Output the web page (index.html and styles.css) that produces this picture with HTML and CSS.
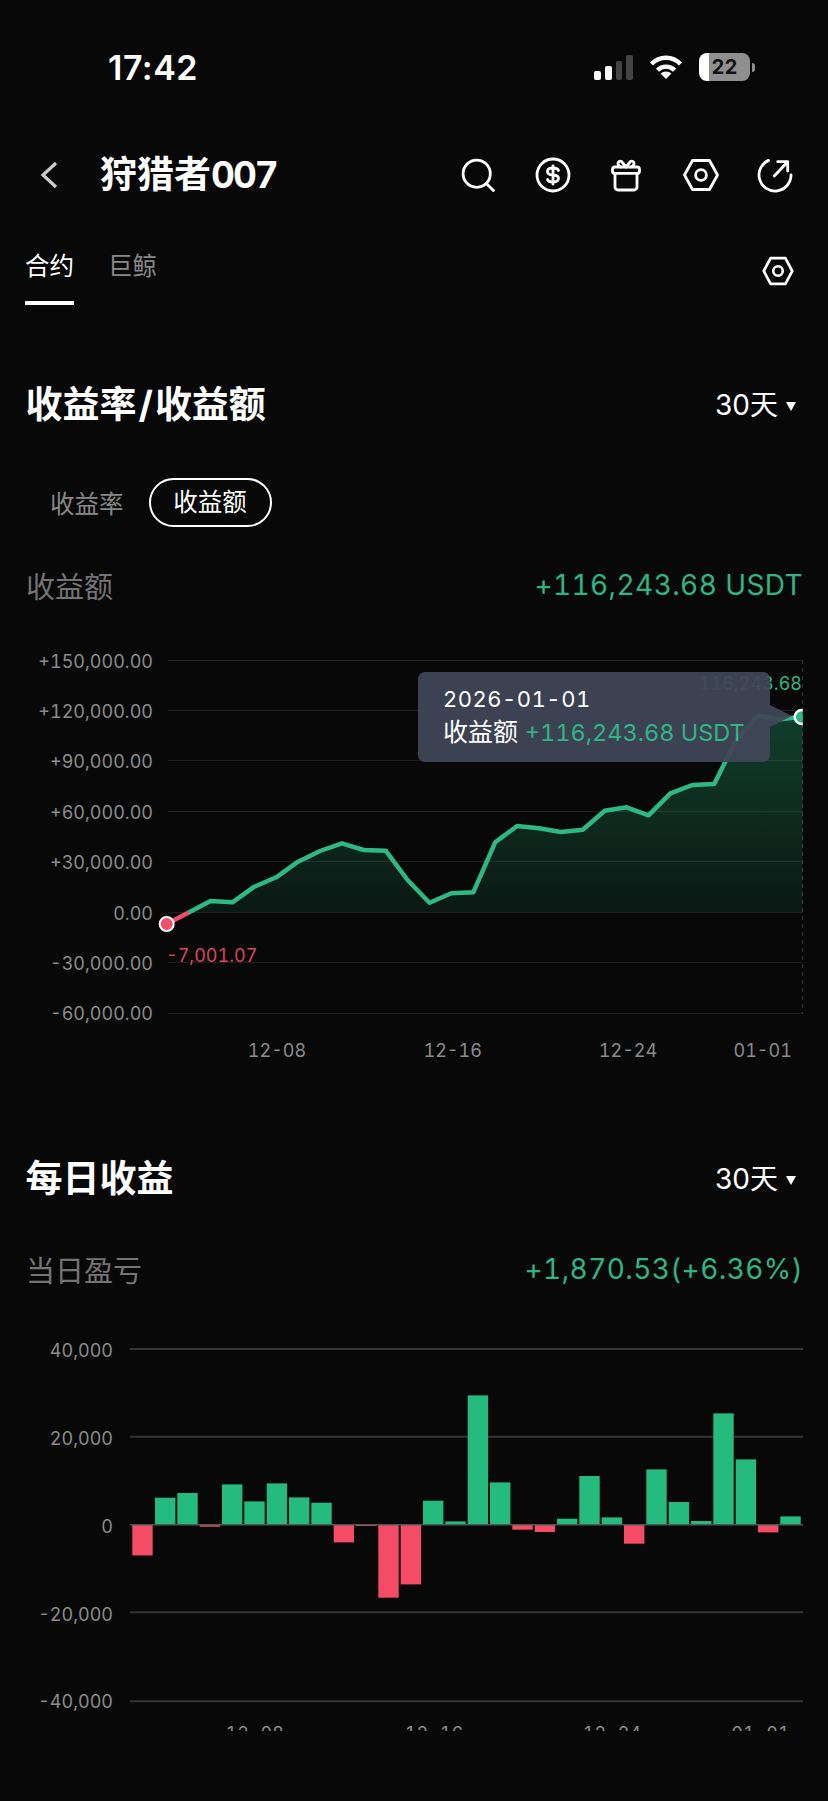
FILE: index.html
```html
<!DOCTYPE html>
<html lang="zh-CN">
<head>
    <meta charset="UTF-8">
    <meta name="viewport" content="width=device-width, initial-scale=1.0">
    <title>狩猎者007</title>
    <link rel="stylesheet" href="styles.css">
</head>
<body>
    <div class="page">
        <!-- Статус-бар -->
        <div class="status-bar">
            <div class="time">17:42</div>
            <div class="status-icons">
                <div class="signal">
                    <span class="bar b1 on"></span>
                    <span class="bar b2 on"></span>
                    <span class="bar b3"></span>
                    <span class="bar b4"></span>
                </div>
                <svg class="wifi" viewBox="0 0 34 24" width="34" height="24">
                    <path d="M2.5 9A20 20 0 0 1 31.5 9" fill="none" stroke="#fff" stroke-width="4.4"/>
                    <path d="M8.5 15.2A12 12 0 0 1 25.5 15.2" fill="none" stroke="#fff" stroke-width="4.4"/>
                    <path d="M17 24L11.6 18.6A8 8 0 0 1 22.4 18.6Z" fill="#fff"/>
                </svg>
                <div class="battery"><span>22</span></div>
                <div class="battery-tip"></div>
            </div>
        </div>

        <!-- Шапка -->
        <div class="nav">
            <svg class="back" viewBox="0 0 18 28" width="18" height="28">
                <path d="M16 2L3 14L16 26" fill="none" stroke="#ccc" stroke-width="3.2"/>
            </svg>
            <h1 class="nav-title">狩猎者<span class="nav-num">007</span></h1>
            <div class="nav-icons">
                <svg class="icon" viewBox="0 0 40 40">
                    <circle cx="19.7" cy="18.7" r="13.6"/>
                    <path d="M29.4 28.4L36.4 35.6"/>
                </svg>
                <svg class="icon icon-coin" viewBox="0 0 40 40">
                    <circle cx="20" cy="20" r="16"/>
                    <path d="M25.5 15.5C25 13.8 23 13 20 13C16.5 13 14.5 14.6 14.5 16.7C14.5 19 17 19.7 20 20C23 20.3 25.5 21 25.5 23.3C25.5 25.4 23.5 27 20 27C17 27 15 26.2 14.5 24.5M20 10.8V29.2"/>
                </svg>
                <svg class="icon" viewBox="0 0 40 40">
                    <rect x="6.5" y="12" width="27" height="6.4" rx="2.5"/>
                    <path d="M9 18.4V32A3 3 0 0 0 12 35H28A3 3 0 0 0 31 32V18.4"/>
                    <path d="M20 12L15.5 6.5C14 5.5 12 6.5 12 8.5C12 10.5 13 11.5 15 12M20 12L24.5 6.5C26 5.5 28 6.5 28 8.5C28 10.5 27 11.5 25 12"/>
                </svg>
                <svg class="icon" viewBox="0 0 40 40">
                    <path d="M3.5 20L11.5 5.5H28.5L36.5 20L28.5 34.5H11.5Z"/>
                    <circle cx="20" cy="20" r="5.4"/>
                </svg>
                <svg class="icon" viewBox="0 0 40 40">
                    <path d="M13.5 5.4A16 16 0 1 0 36 20"/>
                    <path d="M19.3 21L32.7 6.7M22.7 6.7H32.7V16"/>
                </svg>
            </div>
        </div>

        <!-- Вкладки -->
        <div class="tabs">
            <div class="tab active">合约</div>
            <div class="tab">巨鲸</div>
            <svg class="icon tab-icon" viewBox="0 0 40 40">
                <path d="M5 20L12.2 6.5H27.8L35 20L27.8 33.5H12.2Z"/>
                <circle cx="20" cy="20" r="5"/>
            </svg>
        </div>

        <!-- Доходность -->
        <div class="section-head first">
            <h2>收益率<span class="slash">/</span>收益额</h2>
            <div class="range">30天<i class="caret"></i></div>
        </div>

        <div class="switch">
            <div class="switch-item">收益率</div>
            <div class="switch-item selected">收益额</div>
        </div>

        <div class="value-row">
            <span class="value-label">收益额</span>
            <span class="value-num">+116,243.68 USDT</span>
        </div>

        <div class="chart line-chart">
            <svg viewBox="0 640 828 430" width="828" height="430">
                <defs>
                    <linearGradient id="areaFill" x1="0" y1="0" x2="0" y2="1">
                        <stop offset="0" stop-color="#26bb7e" stop-opacity="0.3"/>
                        <stop offset="1" stop-color="#26bb7e" stop-opacity="0.09"/>
                    </linearGradient>
                    <clipPath id="plotClip"><rect x="130" y="640" width="672.7" height="400"/></clipPath>
                </defs>

                <g class="grid-thin">
                    <line x1="168" x2="803" y1="660.5" y2="660.5"/>
                    <line x1="168" x2="803" y1="710.5" y2="710.5"/>
                    <line x1="168" x2="803" y1="760.5" y2="760.5"/>
                    <line x1="168" x2="803" y1="811.5" y2="811.5"/>
                    <line x1="168" x2="803" y1="861.5" y2="861.5"/>
                    <line x1="168" x2="803" y1="912.5" y2="912.5"/>
                    <line x1="168" x2="803" y1="962.5" y2="962.5"/>
                    <line x1="168" x2="803" y1="1013.5" y2="1013.5"/>
                </g>
                <line class="grid-dash" x1="802.5" x2="802.5" y1="660" y2="1014"/>

                <g class="axis-y">
                    <text x="153" y="668">+150,000.00</text>
                    <text x="153" y="718">+120,000.00</text>
                    <text x="153" y="768">+90,000.00</text>
                    <text x="153" y="819">+60,000.00</text>
                    <text x="153" y="869">+30,000.00</text>
                    <text x="153" y="920">0.00</text>
                    <text x="153" y="970">-30,000.00</text>
                    <text x="153" y="1020">-60,000.00</text>
                </g>
                <g class="axis-x">
                    <text x="277" y="1057">12-08</text>
                    <text x="452.7" y="1057">12-16</text>
                    <text x="628" y="1057">12-24</text>
                    <text x="762.7" y="1057">01-01</text>
                </g>

                <path fill="url(#areaFill)" d="M188.6 912.5L210.5 901L232.4 902.3L254.3 886.7L276.2 877.3L298.1 861.7L320 851L341.9 843.3L363.8 850L385.7 850.7L407.6 880L429.5 902.7L451.4 893.3L473.3 892.3L495.2 842.3L517.1 826L539 828.3L560.9 832L582.8 829.7L604.7 810.7L626.6 807.3L648.5 815.3L670.4 793.3L692.3 785L714.2 784L736.1 740L758 716L779.9 719.3L802.7 716.7V912.5Z"/>
                <path class="line-red" d="M166.7 924L189.6 912"/>
                <path class="line-green" d="M188.6 912.5L210.5 901L232.4 902.3L254.3 886.7L276.2 877.3L298.1 861.7L320 851L341.9 843.3L363.8 850L385.7 850.7L407.6 880L429.5 902.7L451.4 893.3L473.3 892.3L495.2 842.3L517.1 826L539 828.3L560.9 832L582.8 829.7L604.7 810.7L626.6 807.3L648.5 815.3L670.4 793.3L692.3 785L714.2 784L736.1 740L758 716L779.9 719.3L802.7 716.7"/>

                <circle class="dot-red" cx="166.7" cy="924" r="7"/>
                <g clip-path="url(#plotClip)">
                    <circle class="dot-green" cx="801.7" cy="717" r="7"/>
                </g>
                <text class="label-red" x="166" y="962">-7,001.07</text>
                <text class="label-green" x="802" y="690">116,243.68</text>
            </svg>

            <div class="tooltip">
                <div class="tooltip-date">2026-01-01</div>
                <div class="tooltip-row">收益额 <span>+116,243.68 USDT</span></div>
            </div>
        </div>

        <!-- Ежедневная прибыль -->
        <div class="section-head second">
            <h2>每日收益</h2>
            <div class="range">30天<i class="caret"></i></div>
        </div>

        <div class="value-row daily">
            <span class="value-label">当日盈亏</span>
            <span class="value-num">+1,870.53(+6.36%)</span>
        </div>

        <div class="chart bar-chart">
            <svg viewBox="0 1320 828 411" width="828" height="411">
                <g class="grid-thick">
                    <line x1="130" x2="803" y1="1349" y2="1349"/>
                    <line x1="130" x2="803" y1="1436.7" y2="1436.7"/>
                    <line x1="130" x2="803" y1="1612.3" y2="1612.3"/>
                    <line x1="130" x2="803" y1="1701.3" y2="1701.3"/>
                </g>
                <g class="axis-y">
                    <text x="113" y="1357">40,000</text>
                    <text x="113" y="1445">20,000</text>
                    <text x="113" y="1533">0</text>
                    <text x="113" y="1621">-20,000</text>
                    <text x="113" y="1708">-40,000</text>
                </g>
                <g class="bars-red">
                    <rect x="132.3" y="1524.7" width="20.4" height="30.7"/>
                    <rect x="199.7" y="1524.7" width="20.4" height="2"/>
                    <rect x="333.7" y="1524.7" width="20.4" height="17.7"/>
                    <rect x="356" y="1524.7" width="20.4" height="1.3"/>
                    <rect x="378.3" y="1524.7" width="20.4" height="73"/>
                    <rect x="400.7" y="1524.7" width="20.4" height="59.7"/>
                    <rect x="512.3" y="1524.7" width="20.4" height="5"/>
                    <rect x="534.7" y="1524.7" width="20.4" height="7.3"/>
                    <rect x="624" y="1524.7" width="20.4" height="19"/>
                    <rect x="758" y="1524.7" width="20.4" height="7.7"/>
                </g>
                <g class="bars-green">
                    <rect x="155" y="1497.7" width="20.4" height="27"/>
                    <rect x="177.3" y="1493" width="20.4" height="31.7"/>
                    <rect x="222" y="1484.4" width="20.4" height="40.3"/>
                    <rect x="244.3" y="1501.4" width="20.4" height="23.3"/>
                    <rect x="266.7" y="1483.4" width="20.4" height="41.3"/>
                    <rect x="289" y="1497.4" width="20.4" height="27.3"/>
                    <rect x="311.3" y="1502.7" width="20.4" height="22"/>
                    <rect x="423" y="1500.7" width="20.4" height="24"/>
                    <rect x="445.3" y="1521.4" width="20.4" height="3.3"/>
                    <rect x="467.7" y="1395.4" width="20.4" height="129.3"/>
                    <rect x="490" y="1482.4" width="20.4" height="42.3"/>
                    <rect x="557" y="1518.7" width="20.4" height="6"/>
                    <rect x="579.3" y="1476" width="20.4" height="48.7"/>
                    <rect x="601.7" y="1517.4" width="20.4" height="7.3"/>
                    <rect x="646.3" y="1469.4" width="20.4" height="55.3"/>
                    <rect x="668.7" y="1502" width="20.4" height="22.7"/>
                    <rect x="691" y="1521" width="20.4" height="3.7"/>
                    <rect x="713.3" y="1413.4" width="20.4" height="111.3"/>
                    <rect x="735.7" y="1459.4" width="20.4" height="65.3"/>
                    <rect x="780.3" y="1516.4" width="20.4" height="8.3"/>
                </g>
                <line class="zero-line" x1="130" x2="803" y1="1524.7" y2="1524.7"/>
                <g class="axis-x">
                    <text x="254.7" y="1740">12-08</text>
                    <text x="434" y="1740">12-16</text>
                    <text x="612" y="1740">12-24</text>
                    <text x="760.5" y="1740">01-01</text>
                </g>
            </svg>
        </div>
    </div>
</body>
</html>
```
FILE: styles.css
```css
* {
    box-sizing: border-box;
}

html, body {
    margin: 0;
    padding: 0;
    background-color: #080809;
}

body {
    font-family: Inter, "Noto Sans CJK SC", sans-serif;
    font-variant-numeric: tabular-nums;
    color: #fff;
}

.page {
    width: 828px;
    height: 1801px;
    overflow: hidden;
}

/* Статус-бар */
.status-bar {
    height: 134px;
    display: flex;
    align-items: center;
    justify-content: space-between;
    padding: 0 73px 0 108px;
}

.time {
    font-size: 34px;
    font-weight: 600;
    font-variant-numeric: normal;
    letter-spacing: 0.5px;
}

.status-icons {
    display: flex;
    align-items: center;
}

.signal {
    display: flex;
    align-items: flex-end;
    gap: 4px;
    height: 26px;
}

.bar {
    width: 6.7px;
    border-radius: 2px;
    background-color: #444;
}

.bar.on { background-color: #fff; }
.b1 { height: 9px; }
.b2 { height: 14px; }
.b3 { height: 19px; }
.b4 { height: 25px; }

.wifi {
    margin-left: 16px;
}

.battery {
    margin-left: 16px;
    width: 51px;
    height: 28px;
    border-radius: 8px;
    background: linear-gradient(to right, #fff 10.5px, #8f8f8f 10.5px);
    color: #111;
    font-size: 20px;
    font-weight: 700;
    line-height: 28px;
    text-align: center;
}

.battery-tip {
    width: 3px;
    height: 9px;
    margin-left: 2px;
    border-radius: 0 3px 3px 0;
    background-color: #8f8f8f;
}

/* Шапка */
.nav {
    height: 80px;
    display: flex;
    align-items: center;
    padding: 2px 0 0 40px;
}

.nav-title {
    margin: 0 0 0 42px;
    font-size: 37px;
    font-weight: 700;
    line-height: 48px;
}

.nav-num {
    letter-spacing: -2px;
}

.nav-icons {
    margin-left: auto;
    display: flex;
    gap: 34.5px;
    padding-right: 33px;
}

.icon {
    width: 40px;
    height: 40px;
    fill: none;
    stroke: #fff;
    stroke-width: 2.8;
    stroke-linejoin: round;
    stroke-linecap: round;
}

.icon-coin {
    position: relative;
    left: 1px;
}

/* Вкладки */
.tabs {
    height: 91px;
    display: flex;
    gap: 34px;
    padding: 0 31px 0 25px;
}

.tab {
    height: 91px;
    padding-top: 35px;
    font-size: 24.5px;
    line-height: 34px;
    color: #888;
}

.tab.active {
    color: #fff;
    border-bottom: 4px solid #fff;
}

.tab-icon {
    margin: 38px 0 0 auto;
    width: 38px;
    height: 38px;
}

/* Заголовки секций */
.section-head {
    height: 40px;
    display: flex;
    align-items: center;
    justify-content: space-between;
    padding: 0 32px 0 25.5px;
}

.section-head.first { margin-top: 80px; }
.section-head.second { margin-top: 89px; }

.section-head h2 {
    margin: 0;
    font-size: 37px;
    font-weight: 700;
    line-height: 40px;
}

.slash {
    margin: 0 2px;
}

.range {
    display: flex;
    align-items: center;
    font-size: 28px;
    font-variant-numeric: normal;
    line-height: 40px;
}

.caret {
    margin-left: 8px;
    margin-top: 3px;
    width: 0;
    height: 0;
    border-left: 5.5px solid transparent;
    border-right: 5.5px solid transparent;
    border-top: 9px solid #fff;
}

/* Переключатель */
.switch {
    margin-top: 53px;
    height: 49px;
    display: flex;
    align-items: center;
    padding-left: 50px;
    font-size: 24.5px;
}

.switch-item {
    color: #888;
}

.switch-item.selected {
    margin-left: 25px;
    width: 123px;
    height: 49px;
    border: 2.5px solid #fff;
    border-radius: 25px;
    color: #fff;
    line-height: 45px;
    text-align: center;
}

/* Строка значения */
.value-row {
    margin-top: 38px;
    height: 40px;
    display: flex;
    align-items: center;
    justify-content: space-between;
    padding: 0 25px 0 26px;
}

.value-row.daily {
    margin-top: 50px;
}

.value-label {
    font-size: 29px;
    color: #747474;
}

.value-num {
    font-size: 28px;
    color: #2fb583;
    letter-spacing: 0.4px;
}

/* Графики */
.chart {
    position: relative;
}

.chart svg {
    display: block;
}

.line-chart {
    margin-top: 35px;
    height: 430px;
}

.bar-chart {
    margin-top: 31px;
    height: 411px;
}

.grid-thin line {
    stroke: #1f1f20;
    stroke-width: 1;
}

.grid-thick line {
    stroke: #353536;
    stroke-width: 2;
}

.grid-dash {
    stroke: #333;
    stroke-width: 1;
    stroke-dasharray: 4 4;
}

.zero-line {
    stroke: #4a5a52;
    stroke-width: 1.5;
}

.axis-y text,
.axis-x text {
    font-size: 18px;
    fill: #8c8c8c;
}

.axis-y text { text-anchor: end; }
.axis-x text { text-anchor: middle; }

.line-green,
.line-red {
    fill: none;
    stroke-width: 4.5;
    stroke-linejoin: round;
}

.line-green { stroke: #2eb984; }
.line-red { stroke: #ef4d68; }

.dot-red {
    fill: #f04e69;
    stroke: #fff;
    stroke-width: 2;
}

.dot-green {
    fill: #2eb984;
    stroke: #fff;
    stroke-width: 2.5;
}

.label-red {
    font-size: 18px;
    fill: #d9455d;
}

.label-green {
    font-size: 18px;
    fill: #2eb984;
    text-anchor: end;
}

.bars-green rect { fill: #26bb7e; }
.bars-red rect { fill: #f44c66; }

/* Подсказка */
.tooltip {
    position: absolute;
    left: 418px;
    top: 32px;
    width: 352px;
    height: 90px;
    padding: 11px 25px;
    border-radius: 7px;
    background-color: rgba(65, 70, 88, 0.94);
    font-size: 22px;
    line-height: 33px;
}

.tooltip::after {
    content: "";
    position: absolute;
    left: 100%;
    top: 33px;
    border-top: 11px solid transparent;
    border-bottom: 11px solid transparent;
    border-left: 22px solid rgba(65, 70, 88, 0.94);
}

.tooltip-date {
    letter-spacing: 0.5px;
}

.tooltip-row {
    font-size: 25px;
    white-space: nowrap;
}

.tooltip-row span {
    font-size: 23.5px;
    color: #2fb583;
}
```
